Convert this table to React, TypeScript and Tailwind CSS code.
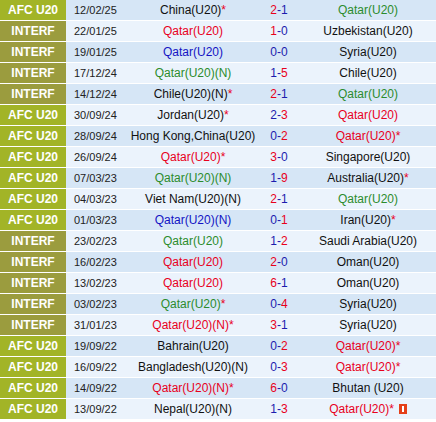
type Side = { name: string; color: string; star?: boolean; card?: boolean }
type Match = { league: "AFC U20" | "INTERF"; date: string; home: Side; score: [number, number]; away: Side }

const RED = "text-[#e8001c]"
const GREEN = "text-[#2c8c2c]"
const BLUE = "text-[#1414c4]"
const BLACK = "text-[#111]"

const rows: Match[] = [
  { league: "AFC U20", date: "12/02/25", home: { name: "China(U20)", color: BLACK, star: true }, score: [2, 1], away: { name: "Qatar(U20)", color: GREEN } },
  { league: "INTERF", date: "22/01/25", home: { name: "Qatar(U20)", color: RED }, score: [1, 0], away: { name: "Uzbekistan(U20)", color: BLACK } },
  { league: "INTERF", date: "19/01/25", home: { name: "Qatar(U20)", color: BLUE }, score: [0, 0], away: { name: "Syria(U20)", color: BLACK } },
  { league: "INTERF", date: "17/12/24", home: { name: "Qatar(U20)(N)", color: GREEN }, score: [1, 5], away: { name: "Chile(U20)", color: BLACK } },
  { league: "INTERF", date: "14/12/24", home: { name: "Chile(U20)(N)", color: BLACK, star: true }, score: [2, 1], away: { name: "Qatar(U20)", color: GREEN } },
  { league: "AFC U20", date: "30/09/24", home: { name: "Jordan(U20)", color: BLACK, star: true }, score: [2, 3], away: { name: "Qatar(U20)", color: RED } },
  { league: "AFC U20", date: "28/09/24", home: { name: "Hong Kong,China(U20)", color: BLACK }, score: [0, 2], away: { name: "Qatar(U20)", color: RED, star: true } },
  { league: "AFC U20", date: "26/09/24", home: { name: "Qatar(U20)", color: RED, star: true }, score: [3, 0], away: { name: "Singapore(U20)", color: BLACK } },
  { league: "AFC U20", date: "07/03/23", home: { name: "Qatar(U20)(N)", color: GREEN }, score: [1, 9], away: { name: "Australia(U20)", color: BLACK, star: true } },
  { league: "AFC U20", date: "04/03/23", home: { name: "Viet Nam(U20)(N)", color: BLACK }, score: [2, 1], away: { name: "Qatar(U20)", color: GREEN } },
  { league: "AFC U20", date: "01/03/23", home: { name: "Qatar(U20)(N)", color: BLUE }, score: [0, 1], away: { name: "Iran(U20)", color: BLACK, star: true } },
  { league: "INTERF", date: "23/02/23", home: { name: "Qatar(U20)", color: GREEN }, score: [1, 2], away: { name: "Saudi Arabia(U20)", color: BLACK } },
  { league: "INTERF", date: "16/02/23", home: { name: "Qatar(U20)", color: RED }, score: [2, 0], away: { name: "Oman(U20)", color: BLACK } },
  { league: "INTERF", date: "13/02/23", home: { name: "Qatar(U20)", color: RED }, score: [6, 1], away: { name: "Oman(U20)", color: BLACK } },
  { league: "INTERF", date: "03/02/23", home: { name: "Qatar(U20)", color: GREEN, star: true }, score: [0, 4], away: { name: "Syria(U20)", color: BLACK } },
  { league: "INTERF", date: "31/01/23", home: { name: "Qatar(U20)(N)", color: RED, star: true }, score: [3, 1], away: { name: "Syria(U20)", color: BLACK } },
  { league: "AFC U20", date: "19/09/22", home: { name: "Bahrain(U20)", color: BLACK }, score: [0, 2], away: { name: "Qatar(U20)", color: RED, star: true } },
  { league: "AFC U20", date: "16/09/22", home: { name: "Bangladesh(U20)(N)", color: BLACK }, score: [0, 3], away: { name: "Qatar(U20)", color: RED, star: true } },
  { league: "AFC U20", date: "14/09/22", home: { name: "Qatar(U20)(N)", color: RED, star: true }, score: [6, 0], away: { name: "Bhutan (U20)", color: BLACK } },
  { league: "AFC U20", date: "13/09/22", home: { name: "Nepal(U20)(N)", color: BLACK }, score: [1, 3], away: { name: "Qatar(U20)", color: RED, star: true, card: true } },
]

const Team = ({ side }: { side: Side }) => (
  <div className="flex items-center justify-center whitespace-nowrap text-[12px]">
    <span className={side.color}>{side.name}</span>
    {side.star && <span className={RED}>*</span>}
    {side.card && (
      <svg className="ml-[5px]" width="8" height="10" viewBox="0 0 8 10">
        <rect width="8" height="10" fill="#e5401a" />
        <rect x="3" y="2" width="2" height="6" fill="#fff" />
      </svg>
    )}
  </div>
)

const Score = ({ s }: { s: [number, number] }) => {
  const [h, a] = s
  return (
    <div className="flex items-center justify-center text-[12px] text-[#1c1cae]">
      <span className={h > a ? RED : ""}>{h}</span>
      <span>-</span>
      <span className={a > h ? RED : ""}>{a}</span>
    </div>
  )
}

export default function App() {
  return (
    <div className="w-[436px] h-[422px] bg-white" style={{ fontFamily: '"Liberation Sans", Arial, sans-serif' }}>
      {rows.map((r, i) => (
        <div
          key={i}
          className={`grid grid-cols-[66px_62px_130px_42px_136px] h-[21px] border-b border-white ${i % 2 === 0 ? "bg-[#d6e6f6]" : "bg-[#ebf3fc]"}`}
        >
          <div
            className={`flex items-center justify-center text-white font-bold text-[12px] ${r.league === "AFC U20" ? "bg-[#a2b427]" : "bg-[#9b9c3e]"}`}
          >
            {r.league}
          </div>
          <div className="flex items-center pl-[8px] text-[11px] text-[#222]">{r.date}</div>
          <Team side={r.home} />
          <Score s={r.score} />
          <Team side={r.away} />
        </div>
      ))}
    </div>
  )
}
